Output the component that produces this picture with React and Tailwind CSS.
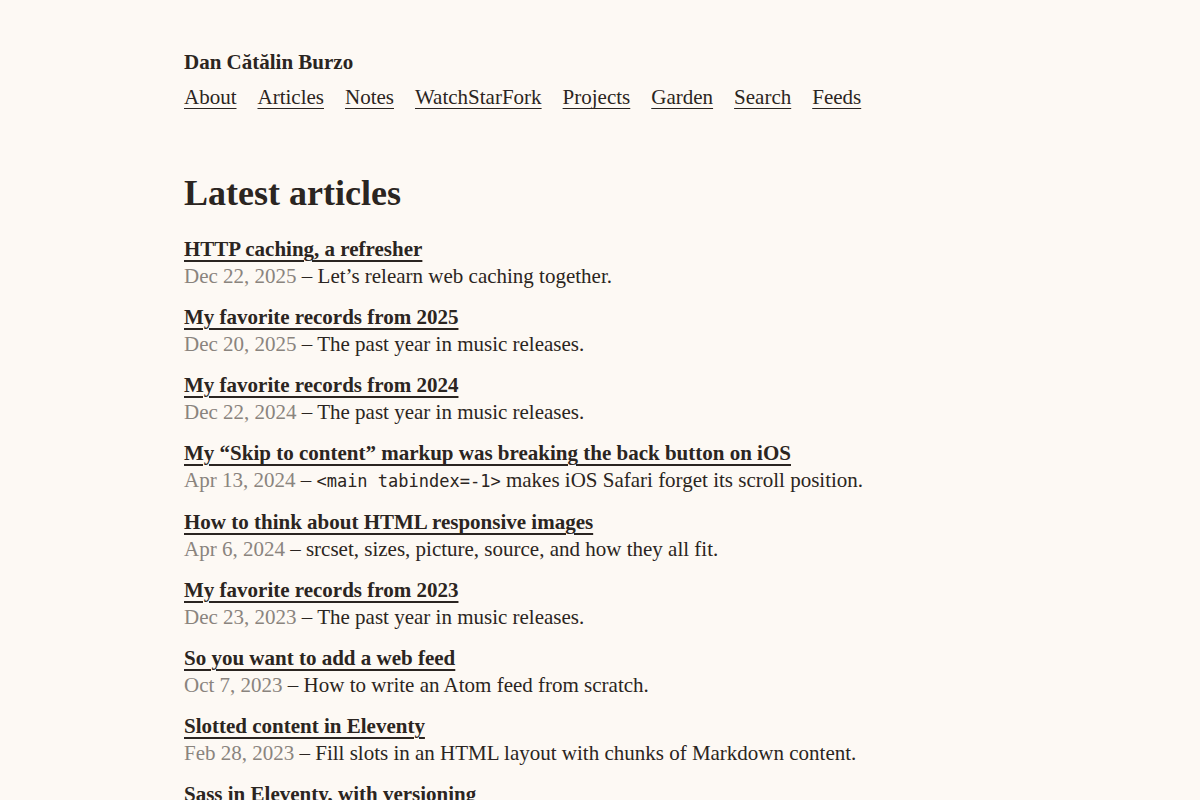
import React from "react";

const links = ["About", "Articles", "Notes", "WatchStarFork", "Projects", "Garden", "Search", "Feeds"];

const articles = [
  { title: "HTTP caching, a refresher", date: "Dec 22, 2025", desc: "Let’s relearn web caching together." },
  { title: "My favorite records from 2025", date: "Dec 20, 2025", desc: "The past year in music releases." },
  { title: "My favorite records from 2024", date: "Dec 22, 2024", desc: "The past year in music releases." },
  {
    title: "My “Skip to content” markup was breaking the back button on iOS",
    date: "Apr 13, 2024",
    code: "<main tabindex=-1>",
    desc: "makes iOS Safari forget its scroll position.",
  },
  { title: "How to think about HTML responsive images", date: "Apr 6, 2024", desc: "srcset, sizes, picture, source, and how they all fit." },
  { title: "My favorite records from 2023", date: "Dec 23, 2023", desc: "The past year in music releases." },
  { title: "So you want to add a web feed", date: "Oct 7, 2023", desc: "How to write an Atom feed from scratch." },
  { title: "Slotted content in Eleventy", date: "Feb 28, 2023", desc: "Fill slots in an HTML layout with chunks of Markdown content." },
  { title: "Sass in Eleventy, with versioning", date: "Jan 14, 2023", desc: "Compile stylesheets and bust the cache." },
];

export default function App() {
  return (
    <div className="min-h-screen bg-[#fdf9f4] text-[#2b2521] font-['Liberation_Serif',serif]">
      <div className="pl-[184px] pt-[48px]">
        <header>
          <div className="text-[21px] font-bold leading-[28px]">Dan Cătălin Burzo</div>
          <nav className="mt-[7px] flex gap-[21px] text-[21px] leading-[28px]">
            {links.map((l) => (
              <a key={l} href="#" className="underline underline-offset-[4px] decoration-1">
                {l}
              </a>
            ))}
          </nav>
        </header>

        <main className="mt-[60px]">
          <h2 className="text-[36px] font-bold leading-[44px]">Latest articles</h2>
          <ul className="mt-[21px] flex flex-col gap-[14px]">
            {articles.map((a) => (
              <li key={a.title} className="text-[21px] leading-[27px]">
                <a href="#" className="font-bold underline underline-offset-[4px] decoration-[1.5px]">
                  {a.title}
                </a>
                <div>
                  <span className="text-[#8a847e]">{a.date}</span> –{" "}
                  {a.code && (
                    <code className="font-['DejaVu_Sans_Mono',monospace] text-[17px]">{a.code}</code>
                  )}
                  {a.code ? " " : ""}
                  {a.desc}
                </div>
              </li>
            ))}
          </ul>
        </main>
      </div>
    </div>
  );
}
